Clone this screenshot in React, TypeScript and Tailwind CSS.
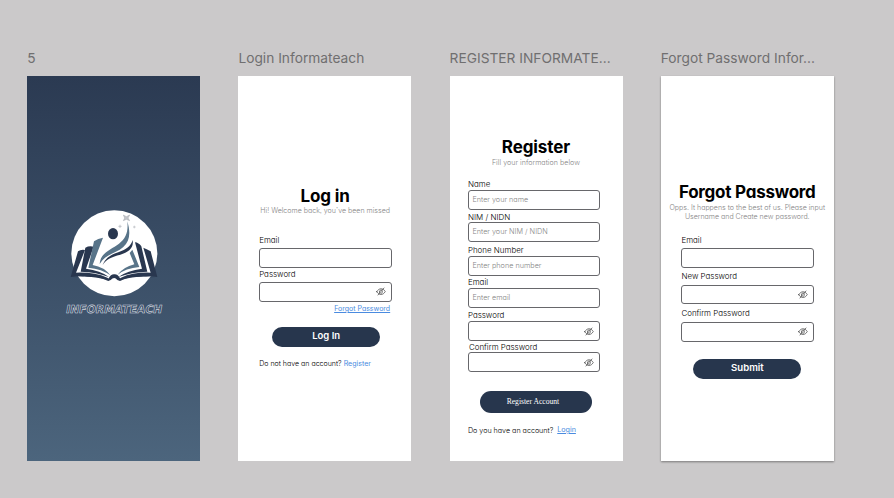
import type { ReactNode } from "react";

const quick = "font-['Inter',sans-serif] [font-feature-settings:'cv11','ss03']";

function Line({ className = "", children }: { className?: string; children: ReactNode }) {
  return <div className={`h-[10px] shrink-0 whitespace-nowrap ${className}`}>{children}</div>;
}

function Label({ className = "", children }: { className?: string; children: ReactNode }) {
  return <Line className={`text-[7.950px] font-light leading-[11px] text-black ${className}`}>{children}</Line>;
}

function HiddenEye() {
  return (
    <svg className="h-[9px] w-[10px]" viewBox="0 0 20 18" fill="none" stroke="#3d3d3d" strokeWidth="1.400" strokeLinecap="round">
      <path d="M1.5 9.5C4 5 7 3.6 10 3.6s6 1.400 8.500 5.400c-2.500 4.500-5.500 5.900-8.500 5.900S4 13.500 1.500 9.500Z" />
      <path d="M7.200 12C5.800 9 7.500 6 10 6c1.200 0 2 .5 2.600 1.200M13 9.500c0 2-1.500 3.200-3 3.200" />
      <path d="M4 16 16 2" />
    </svg>
  );
}

function Field({ className = "", placeholder, secret }: { className?: string; placeholder?: string; secret?: boolean }) {
  return (
    <div className={`flex w-[132.500px] shrink-0 items-center rounded-[3px] border border-[#67676b] bg-white pl-[3.500px] pr-[5px] ${className}`}>
      {placeholder && <span className="whitespace-nowrap text-[7.250px] font-light leading-[10px] text-[#858585]">{placeholder}</span>}
      {secret && <span className="ml-auto"><HiddenEye /></span>}
    </div>
  );
}

function Frame({ name, className = "", children }: { name: string; className?: string; children: ReactNode }) {
  return (
    <section className="w-[173px] shrink-0">
      <h2 className="h-[27px] whitespace-nowrap font-['Inter',sans-serif] text-[13.750px] leading-[19px] text-[#706f70]">{name}</h2>
      <div className={`flex h-[385px] flex-col ${quick} ${className}`}>{children}</div>
    </section>
  );
}

function Logo() {
  return (
    <svg className="ml-[23px] mt-[119px] h-[130px] w-[130px]" viewBox="0 0 390 390">
      <circle cx="193" cy="175" r="129" fill="#fff" />
      <g fill="#29374f">
        <path d="M84 169Q92 163 105 165L78 233Q133 231 172 248L178 253 163 251Q120 238 62 246Z" />
        <path d="M106 158Q117 152 131 155L108 221Q151 226 177 246Q139 231 92 230Z" />
        <path d="M302 169Q292 163 280 158L302 233Q250 231 213 248L207 253 222 251Q264 238 322 246Z" />
        <path d="M255 142Q266 143 274 154L292 230Q245 231 205 246Q233 226 276 221Z" />
        <ellipse cx="189" cy="116" rx="15" ry="17" />
        <path d="M158 210C171 180 192 177 214 168C235 160 244 149 248 135C252 160 235 172 211 179C185 186 169 192 158 210Z" />
      </g>
      <g fill="#587489">
        <path d="M132 139Q144 130 159 128L128 210Q163 216 181 241Q156 222 115 218Z" />
        <path d="M149 207C151 172 184 164 207 146C229 130 235 109 232 79C242 113 240 137 220 156C199 175 168 176 149 207Z" />
        <path d="M247 164 268 216Q227 219 202 240Q220 216 253 208L239 174Z" />
      </g>
      <path d="M66 248Q141 235 175 251Q183 237 193 238Q203 237 211 251Q249 235 319 248Q249 240 210 258L202 255Q193 243 182 255L175 258Q132 240 66 248Z" fill="#29374f" />
      <path d="M220 60 229 65 239 60 234 69 239 77 229 73 220 77 224 69Z" fill="#c3c5ca" stroke="#a3a6ac" strokeWidth="1.500" />
      <path d="m210 89 1 4 4 1-4 1-1 4-1-4-4-1 4-1ZM253 92l1 3 3 1-3 1-1 3-1-3-3-1 3-1Z" fill="#b9bcc1" stroke="#b9bcc1" />
      <text
        x="47"
        y="353"
        textLength="288"
        lengthAdjust="spacingAndGlyphs"
        transform="translate(62 0) skewX(-10)"
        fontFamily="'DejaVu Sans', sans-serif"
        fontWeight="700"
        fontSize="33"
        fill="#34485f"
        stroke="#d5dae0"
        strokeWidth="1.700"
      >
        INFORMATEACH
      </text>
    </svg>
  );
}

const titleStyle = "h-[20px] shrink-0 whitespace-nowrap text-center font-bold leading-[21px] text-black";
const subtitleStyle = "text-center text-[7.050px] font-light text-[#858585]";
const buttonStyle = "flex shrink-0 items-center justify-center rounded-full bg-[#27364d] text-white";

export default function App() {
  return (
    <main className="flex h-[498px] w-[894px] gap-[38.200px] overflow-hidden bg-[#cbc9ca] pl-[27.200px] pt-[49px]">
      <Frame name="5" className="bg-linear-to-b from-[#2b3a52] to-[#4c657d]">
        <Logo />
      </Frame>

      <Frame name="Login Informateach" className="bg-white pl-[20.800px]">
        <div className={`${titleStyle} mt-[110px] w-[132px] text-[17px] tracking-[-0.150px]`}>Log in</div>
        <Line className={`w-[132px] leading-[10px] ${subtitleStyle}`}>Hi! Welcome back, you’ve been missed</Line>
        <Label className="mt-[19px]">Email</Label>
        <Field className="mt-[3px] h-[19.500px]" />
        <Label className="mt-[1px]">Password</Label>
        <Field secret className="mt-[3px] h-[20px]" />
        <Line className="mt-[2.500px] w-[131px] text-right text-[7px] leading-[10px] text-[#4a8be0] underline">Forgot Password</Line>
        <div className={`${buttonStyle} ml-[13px] mt-[12.500px] h-[20px] w-[108px] pb-px text-[9.500px] font-semibold`}>Log In</div>
        <Line className="mt-[11.500px] text-[7.050px] font-light leading-[11px] text-black">
          Do not have an account? <span className="font-normal text-[#4a8be0]">Register</span>
        </Line>
      </Frame>

      <Frame name="REGISTER INFORMATE..." className="bg-white pl-[18.400px]">
        <div className={`${titleStyle} mt-[61px] w-[136px] text-[17px] tracking-[-0.100px]`}>Register</div>
        <Line className={`mt-[1px] w-[136px] leading-[10px] tracking-[0.050px] ${subtitleStyle}`}>Fill your information below</Line>
        <Label className="mt-[11px]">Name</Label>
        <Field placeholder="Enter your name" className="mt-[1px] h-[20px]" />
        <Label className="mt-[2px]">NIM / NIDN</Label>
        <Field placeholder="Enter your NIM / NIDN" className="h-[20px]" />
        <Label className="mt-[3px]">Phone Number</Label>
        <Field placeholder="Enter phone number" className="mt-[1px] h-[20px]" />
        <Label className="mt-[1px]">Email</Label>
        <Field placeholder="Enter email" className="mt-[1px] h-[20px]" />
        <Label className="mt-[2px]">Password</Label>
        <Field secret className="mt-[1px] h-[20px]" />
        <Label className="ml-[1px] mt-[1px]">Confirm Password</Label>
        <Field secret className="h-[20px]" />
        <div className={`${buttonStyle} ml-[12px] mt-[19px] h-[22px] w-[112px] pr-[6px] font-['Liberation_Serif',serif] text-[7.600px]`}>
          Register Account
        </div>
        <Line className="mt-[12px] flex gap-[4px] text-[7.150px] font-light leading-[11px] text-black">
          <span>Do you have an account?</span>
          <span className="font-normal leading-[10px] text-[#4a8be0] underline">Login</span>
        </Line>
      </Frame>

      <Frame name="Forgot Password Infor..." className="bg-white pl-[20.700px] shadow-[0_1px_2px_rgba(0,0,0,0.4)]">
        <div className={`${titleStyle} -ml-[20.700px] mt-[106px] w-[173px] text-[17px] tracking-[-0.250px]`}>Forgot Password</div>
        <Line className={`-ml-[20.700px] w-[173px] leading-[11px] ${subtitleStyle}`}>
          Opps. It happens to the best of us. Please input
        </Line>
        <Line className={`-ml-[20.700px] -mt-px w-[173px] leading-[11px] ${subtitleStyle}`}>Username and Create new password.</Line>
        <Label className="mt-[14px]">Email</Label>
        <Field className="mt-[3px] h-[19.500px]" />
        <Label className="mt-[3.500px]">New Password</Label>
        <Field secret className="mt-[3.500px] h-[19.500px]" />
        <Label className="mt-[4px]">Confirm Password</Label>
        <Field secret className="mt-[3.500px] h-[20px]" />
        <div className={`${buttonStyle} ml-[12px] mt-[17px] h-[20px] w-[108px] pb-px text-[9.600px] font-semibold`}>Submit</div>
      </Frame>
    </main>
  );
}
